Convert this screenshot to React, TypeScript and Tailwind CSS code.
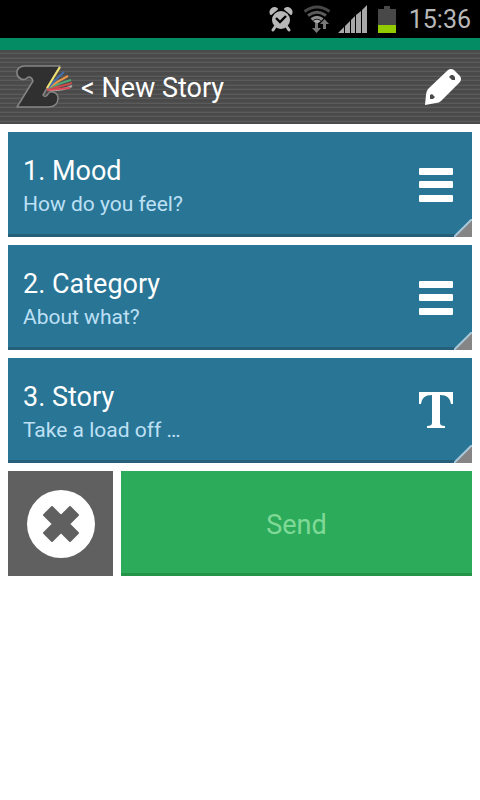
import React from "react";

function StatusBar() {
  return (
    <div className="flex h-[38px] items-center justify-end bg-black pr-[9px] text-[#b8b8b8]">
      <svg width="24" height="26" viewBox="0 0 24 26" className="mr-[10px]" aria-label="Alarm set">
        <circle cx="12" cy="14" r="9" fill="#b8b8b8" />
        <path d="M2 8a4 4 0 0 1 6-5zM22 8a4 4 0 0 0-6-5z" fill="#b8b8b8" stroke="#b8b8b8" strokeWidth="2" strokeLinejoin="round" />
        <path d="M6 21l-2 3M18 21l2 3" stroke="#b8b8b8" strokeWidth="3" strokeLinecap="round" />
        <path d="M7 12l4 4 6-6" fill="none" stroke="#000" strokeWidth="2.4" />
      </svg>
      <svg width="28" height="28" viewBox="0 0 28 28" className="mr-[7px]" aria-label="Wi-Fi">
        <g fill="none" strokeWidth="3">
          <path d="M1.500 6.500Q14-2.500 26.500 6.500" stroke="#484848" />
          <path d="M5 10.500Q14 4 23 10.500" stroke="#5c5c5c" />
          <path d="M8.500 14.500Q14 10 19.500 14.500" stroke="#8c8c8c" />
        </g>
        <path d="M10 16Q14 13 18 16L14 19Z" fill="#a8a8a8" />
        <path d="M12 18h3v5h3l-4.500 5L9 23h3z" fill="#777" />
        <path d="M20 24v-5h-3l4.500-5 4.500 5h-3v5z" fill="#777" />
      </svg>
      <svg width="29" height="28" viewBox="0 0 29 28" className="mr-[11px]" aria-label="Signal strength">
        <path d="M0 28l6-6v6zM7 28v-7l5-5v12zM13 28V15l4-4v17zM18 28V10l5-4v22zM24 28V5l5-5v28z" fill="#a8a8a8" />
      </svg>
      <svg width="18" height="27" viewBox="0 0 18 27" className="mr-[13px]" aria-label="Battery">
        <path d="M0 3h6V0h6v3h6v16H0z" fill="#484848" />
        <path d="M0 19h18v8H0z" fill="#92cc00" />
      </svg>
      <time className="pt-[2px] text-[25px] leading-[36px]">15:36</time>
    </div>
  );
}

function Logo() {
  return (
    <svg width="60" height="46" viewBox="0 0 60 46" aria-label="Z logo">
      <path
        d="M11 2H46L29 31C30 33 33 33 34 30C36 26 44 28 44 34C44 40 40 43 34 43H3L19 17C18 13 15 12 13 14C10 17 4 15 3 10C2 5 6 2 11 2Z"
        fill="#303030"
        stroke="#858585"
        strokeWidth="1.5"
        strokeLinejoin="round"
      />
      <g strokeWidth="2" fill="none">
        <path d="M34 26Q48 27 58 22" stroke="#a9aaa2" />
        <path d="M33 26L56 24" stroke="#e0485a" />
        <path d="M33 25Q46 23 58 19" stroke="#c94b4b" />
        <path d="M34 24Q46 19 57 16" stroke="#52a978" />
        <path d="M34 24Q44 17 54 12" stroke="#e8954a" />
        <path d="M34 24Q42 15 50 8" stroke="#4571b0" />
        <path d="M33 24L46 3" stroke="#f1e36a" />
      </g>
    </svg>
  );
}

function PencilIcon() {
  return (
    <svg width="38" height="38" viewBox="0 0 38 38" aria-hidden="true">
      <path d="M1 37L2 27Q2 24 4 21L24 2Q27 0 30 2L36 8Q38 11 36 14L17 33Q15 35 12 35Z" fill="#fff" />
      <path d="M25 9l2-2h2l2 2v3h-3zM6 27l2-1 3 3-2 2H6z" fill="#4b4b4b" />
    </svg>
  );
}

function MenuIcon() {
  return (
    <svg width="36" height="36" viewBox="0 0 36 36" aria-hidden="true">
      <g fill="#fff">
        <rect x="1" y="1" width="34" height="7" rx="1" />
        <rect x="1" y="14" width="34" height="7" rx="1" />
        <rect x="1" y="28" width="34" height="7" rx="1" />
      </g>
    </svg>
  );
}

function TextIcon() {
  return (
    <svg width="36" height="38" viewBox="0 0 36 38" aria-hidden="true">
      <path d="M1 0H35V12H33C32 6 29 3 22 3V31Q22 34 27 34V36H9V34Q14 34 14 31V3C7 3 4 6 3 12H1Z" fill="#fff" />
    </svg>
  );
}

function StepButton({ title, hint, icon }: { title: string; hint: string; icon: React.ReactNode }) {
  return (
    <button
      type="button"
      className="relative flex h-[105px] w-full items-center justify-between border-b-3 border-[#265f7a] bg-[#297595] pt-1 pr-[18px] pl-[15px] text-left"
    >
      <span className="flex flex-col pt-1">
        <span className="text-[27px] leading-[34px] text-white">{title}</span>
        <span className="text-[21px] leading-8 text-[#bde0f5]">{hint}</span>
      </span>
      {icon}
      <svg width="18" height="18" viewBox="0 0 18 18" className="absolute right-0 -bottom-[3px]" aria-hidden="true">
        <path d="M0 18L18 0V18Z" fill="#858585" />
        <path d="M0 18L18 0" stroke="#a9c7d8" strokeWidth="2" />
      </svg>
    </button>
  );
}

export default function App() {
  return (
    <div className="min-h-screen bg-white font-[Roboto,sans-serif]">
      <StatusBar />
      <header className="flex h-[86px] items-center border-t-12 border-[#048c65] bg-[repeating-linear-gradient(to_bottom,#4a4a4a_0px,#4a4a4a_2px,#555_3px,#616161_4px,#4a4a4a_4px,#4a4a4a_7px,#555_8px,#616161_9px)] pr-[18px] pl-[14px]">
        <Logo />
        <h1 className="flex-1 pt-[2px] pl-[7px] text-[27px] leading-9 text-white">
          <button type="button">&lt; New Story</button>
        </h1>
        <button type="button" aria-label="Edit">
          <PencilIcon />
        </button>
      </header>
      <main className="flex flex-col gap-2 p-2">
        <StepButton title="1. Mood" hint="How do you feel?" icon={<MenuIcon />} />
        <StepButton title="2. Category" hint="About what?" icon={<MenuIcon />} />
        <StepButton title="3. Story" hint="Take a load off …" icon={<TextIcon />} />
        <div className="flex gap-2">
          <button type="button" aria-label="Cancel" className="flex size-[105px] items-center justify-center bg-[#606060]">
            <svg width="70" height="70" viewBox="0 0 70 70" aria-hidden="true">
              <circle cx="35" cy="35" r="34" fill="#fff" />
              <path
                d="M26 18L35 27L44 18L52 26L43 35L52 44L44 52L35 43L26 52L18 44L27 35L18 26Z"
                fill="#606060"
                stroke="#606060"
                strokeWidth="2"
                strokeLinejoin="round"
              />
            </svg>
          </button>
          <button type="button" disabled className="h-[105px] flex-1 border-b-3 border-[#259449] bg-[#2cab5b] pt-[6px] text-[27px] text-[#80d996]">
            Send
          </button>
        </div>
      </main>
    </div>
  );
}
